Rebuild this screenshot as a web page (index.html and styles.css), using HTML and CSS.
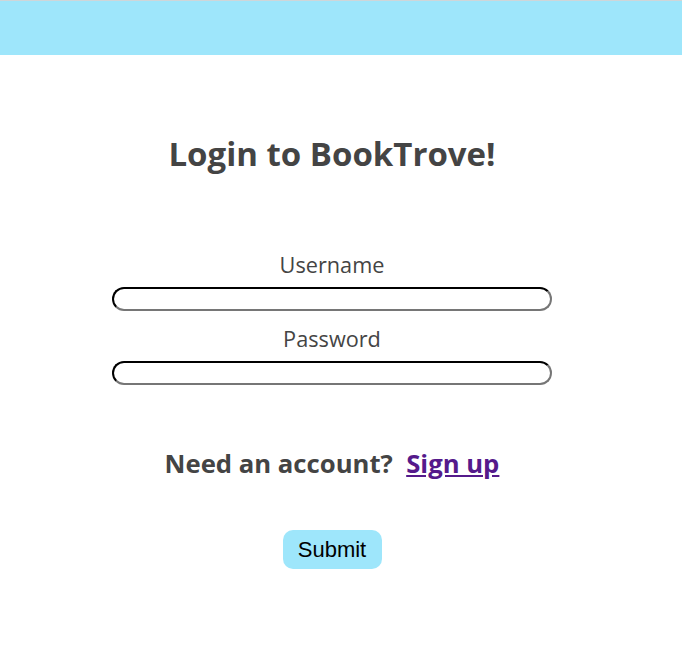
FILE: index.html
```html
<!DOCTYPE html>
<html>
<head>
<meta charset="utf-8">
<link rel="stylesheet" href="styles.css">
</head>
<body>
<header class="topbar"></header>
<main class="login">
  <h1 class="title">Login to BookTrove!</h1>
  <form class="form">
    <label class="label" for="u">Username</label>
    <input class="field" id="u" type="text">
    <label class="label" for="p">Password</label>
    <input class="field" id="p" type="password">
    <p class="signup">Need an account?&nbsp; <a class="link" href="#">Sign up</a></p>
    <button class="submit" type="button">Submit</button>
  </form>
</main>
</body>
</html>
```
FILE: styles.css
```css
html, body { margin: 0; padding: 0; background: #fff; }
body { font-family: "Open Sans", sans-serif; color: #444; }
.topbar { height: 54px; background: #9ee6fb; border-top: 1px solid #cfd6d9; }
.login { display: flex; flex-direction: column; align-items: center; padding-right: 18px; }
.title { margin: 76px 0 0; font-size: 33px; font-weight: 700; line-height: 45px; }
.form { display: flex; flex-direction: column; align-items: center; margin-top: 74px; }
.label { font-size: 21.7px; line-height: 30px; }
.field { width: 440px; height: 24px; box-sizing: border-box; border: 2px inset #767676; border-top-color: #1a1a1a; border-left-color: #1a1a1a; border-radius: 12px; margin: 7px 0 13px; padding: 0 6px; }
.signup { margin: 48px 0 0; font-size: 25.7px; font-weight: 700; line-height: 36px; }
.link { color: #551a8b; }
.submit { margin-top: 48px; font-family: "Liberation Sans", Arial, sans-serif; font-size: 22px; color: #000; background: #9ee6fb; border: none; border-radius: 10px; width: 99px; height: 39px; padding: 0; }
```
